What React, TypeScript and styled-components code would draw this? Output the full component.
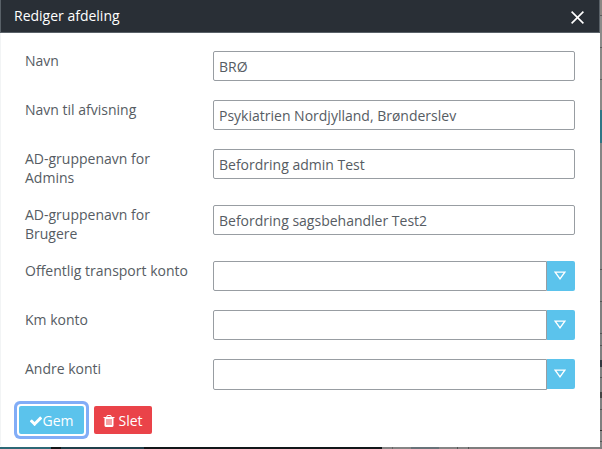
import React from "react";
import styled, { createGlobalStyle } from "styled-components";

const GlobalStyle = createGlobalStyle`
  body { margin: 0; overflow: hidden; }
  *, *::before, *::after { box-sizing: border-box; }
`;

const Backdrop = styled.div`
  display: flex;
  width: 602px;
  height: 449px;
  padding: 0 2px 2px 0;
  font: 14px/19px "Open Sans", "Noto Sans", sans-serif;
  color: #565c63;
  background:
    linear-gradient(to right, #2c6876 0 51px, #111617 51px 61px, #1f3f4a 61px 144px, #111719 144px 382px,
      #858585 382px 392px, #666 392px 393px, #858585 393px 411px, #687379 411px 439px,
      #858585 439px 457px, #555 457px 458px, #858585 458px 468px, #555 468px 469px, #7e7e7e 469px)
      0 447px / 602px 2px no-repeat,
    linear-gradient(#8c8784 0 15px, #5d5d5d 15px 16px, #8c8b8a 16px 47px, #5d5d5d 47px 48px,
      #8a8987 48px 79px, #5d5d5d 79px 80px, #8a8987 80px 110px, #2f7686 110px 143px,
      #858585 143px 269px, #555 269px 270px, #858585 270px 301px, #555 301px 302px,
      #808080 302px 333px, #555 333px 334px, #808080 334px 345px, #555 345px 346px,
      #808080 346px 360px, #333840 360px 367px, #808080 367px 377px, #555 377px 378px,
      #808080 378px 392px, #444 392px 398px, #808080 398px 409px, #555 409px 410px,
      #808080 410px 430px, #333 430px 431px, #858585 431px 441px, #555 441px 442px, #858585 442px)
      600px 0 / 2px 447px no-repeat;
`;

const Dialog = styled.section`
  display: flex;
  flex-direction: column;
  width: 600px;
  border-left: 1px solid #f2f4f5;
  border-radius: 0 0 3px 3px;
  background: #fff;
`;

const Header = styled.header`
  display: flex;
  justify-content: space-between;
  align-items: center;
  height: 33px;
  margin-left: -1px;
  padding: 0 15px 0 13px;
  color: #fff;
  background: #292f36;
  border-left: 1px solid #596168;
  border-right: 1px solid #596168;
  border-bottom: 1px solid #596168;
`;

const Title = styled.h1`
  margin: 0 0 2px;
  font: inherit;
`;

const CloseButton = styled.button`
  display: flex;
  padding: 0;
  border: 0;
  background: none;
  color: #fff;
  svg { width: 13px; height: 13px; margin-top: 2px; }
`;

const Form = styled.form`
  display: flex;
  flex: 1;
  flex-direction: column;
  gap: 18px;
  padding: 18px 25px 0 24px;
`;

const Row = styled.div`
  display: grid;
  grid-template-columns: 188px 362px;
  align-items: start;
  min-height: 31px;
`;

const Label = styled.label`
  padding-right: 20px;
  white-space: pre-line;
`;

const Input = styled.input`
  width: 100%;
  min-width: 0;
  height: 30px;
  padding: 0 5px;
  border: 1px solid #989da2;
  border-radius: 2px;
  outline: 0;
  background: #fff;
  font: inherit;
  color: inherit;
`;

const Combo = styled.div`
  display: flex;
  ${Input} { border-radius: 2px 0 0 2px; }
  ${Row}:last-child & ${Input} { height: 31px; }
`;

const DropButton = styled.button`
  display: flex;
  flex: 0 0 28px;
  align-items: center;
  justify-content: center;
  height: 30px;
  padding: 0;
  border: 0;
  border-radius: 0 2px 2px 0;
  background: #5bc3ec;
  svg { width: 12px; height: 9px; margin: 0 2px 1px 0; }
`;

const Actions = styled.footer`
  display: flex;
  gap: 10px;
  padding: 0 18px 13px;
`;

const ActionButton = styled.button<{ $danger?: boolean; $focused?: boolean }>`
  display: flex;
  align-items: center;
  justify-content: center;
  gap: ${(p) => (p.$danger ? 3 : 0)}px;
  width: ${(p) => (p.$danger ? 58 : 65)}px;
  height: 28px;
  padding: ${(p) => (p.$danger ? "1px 2px 0 0" : "1px 1px 0 0")};
  border: 0;
  border-radius: 2px;
  background: ${(p) => (p.$danger ? "#ea4349" : "#5bc3ec")};
  box-shadow: ${(p) => (p.$focused ? "0 0 0 2px #fff, 0 0 0 5px #82adf7" : "none")};
  font: inherit;
  color: #fff;
  svg { width: 14px; height: 14px; flex: none; margin: 0 -1px 0 1px; }
`;

type Field = { label: string; value?: string; combo?: boolean };

const fields: Field[] = [
  { label: "Navn", value: "BRØ" },
  { label: "Navn til afvisning", value: "Psykiatrien Nordjylland, Brønderslev" },
  { label: "AD-gruppenavn for\nAdmins", value: "Befordring admin Test" },
  { label: "AD-gruppenavn for\nBrugere", value: "Befordring sagsbehandler Test2" },
  { label: "Offentlig transport konto", combo: true },
  { label: "Km konto", combo: true },
  { label: "Andre konti", combo: true },
];

const CheckIcon = () => (
  <svg viewBox="0 0 1792 1792" fill="currentColor">
    <path d="M1671 566q0 40-28 68l-724 724-136 136q-28 28-68 28t-68-28l-136-136-362-362q-28-28-28-68t28-68l136-136q28-28 68-28t68 28l294 295 656-657q28-28 68-28t68 28l136 136q28 28 28 68z" />
  </svg>
);

const TrashIcon = () => (
  <svg viewBox="0 0 1792 1792" fill="currentColor">
    <path d="M704 1376v-704q0-14-9-23t-23-9h-64q-14 0-23 9t-9 23v704q0 14 9 23t23 9h64q14 0 23-9t9-23zm256 0v-704q0-14-9-23t-23-9h-64q-14 0-23 9t-9 23v704q0 14 9 23t23 9h64q14 0 23-9t9-23zm256 0v-704q0-14-9-23t-23-9h-64q-14 0-23 9t-9 23v704q0 14 9 23t23 9h64q14 0 23-9t9-23zm-544-992h448l-48-117q-7-9-17-11h-317q-10 2-17 11zm928 32v64q0 14-9 23t-23 9h-96v948q0 83-47 143.500t-113 60.500h-832q-66 0-113-58.500t-47-141.500v-952h-96q-14 0-23-9t-9-23v-64q0-14 9-23t23-9h309l70-167q15-37 54-63t79-26h320q40 0 79 26t54 63l70 167h309q14 0 23 9t9 23z" />
  </svg>
);

export default function App() {
  return (
    <>
      <GlobalStyle />
      <Backdrop>
        <Dialog>
          <Header>
            <Title>Rediger afdeling</Title>
            <CloseButton aria-label="Luk">
              <svg viewBox="0 0 13 13" fill="none" stroke="currentColor" strokeWidth="1.6">
                <path d="M.6.6 12.400 12.400M12.400.6.6 12.400" />
              </svg>
            </CloseButton>
          </Header>
          <Form>
            {fields.map((f) => (
              <Row key={f.label}>
                <Label>{f.label}</Label>
                {f.combo ? (
                  <Combo>
                    <Input />
                    <DropButton type="button" aria-label="Vis liste">
                      <svg viewBox="0 0 12 9" fill="none" stroke="#fff" strokeWidth="1.3">
                        <path d="M1.200 1.200h9.600L6 7.800z" />
                      </svg>
                    </DropButton>
                  </Combo>
                ) : (
                  <Input defaultValue={f.value} />
                )}
              </Row>
            ))}
          </Form>
          <Actions>
            <ActionButton $focused>
              <CheckIcon />
              Gem
            </ActionButton>
            <ActionButton $danger>
              <TrashIcon />
              Slet
            </ActionButton>
          </Actions>
        </Dialog>
      </Backdrop>
    </>
  );
}
